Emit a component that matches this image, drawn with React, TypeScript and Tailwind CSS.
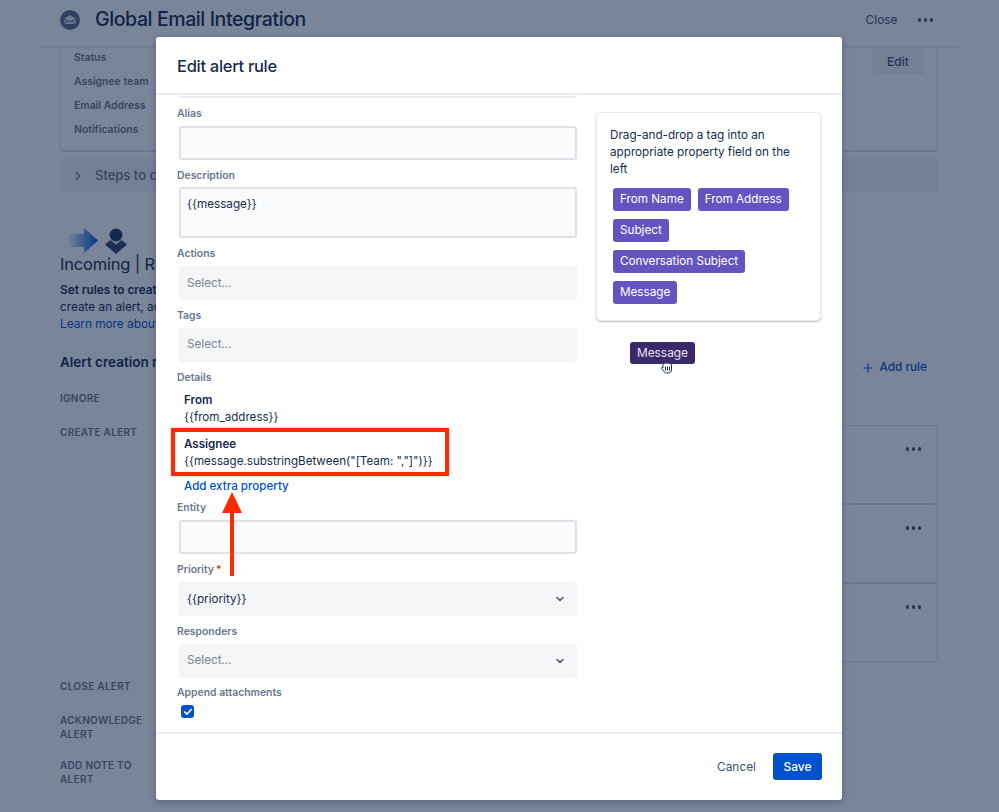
import { Check, ChevronDown, ChevronRight, Plus } from 'lucide-react';

const fontStack = "font-['Inter','Noto_Sans',sans-serif]";

function Dots({ className = '' }: { className?: string }) {
  return (
    <div className={`flex h-1 items-center gap-[2.5px] ${className}`}>
      <span className="size-[3.5px] rounded-full bg-[#42526e]" />
      <span className="size-[3.5px] rounded-full bg-[#42526e]" />
      <span className="size-[3.5px] rounded-full bg-[#42526e]" />
    </div>
  );
}

function MailBadge() {
  return (
    <svg width="20" height="20" viewBox="0 0 20 20" className="shrink-0">
      <circle cx="10" cy="10" r="10" fill="#5e6c84" />
      <path d="M4.5 8.5 10 5l5.500 3.500V14h-11z" fill="#fff" opacity="0.85" />
      <path d="M4.500 9 10 12l5.500-3M4.500 14 8.500 10.800M15.500 14l-4-3.200" fill="none" stroke="#5e6c84" strokeWidth="1" />
    </svg>
  );
}

function IncomingArt() {
  return (
    <svg width="62" height="28" viewBox="0 0 62 28" className="ml-[7px]">
      <defs>
        <linearGradient id="incoming-arrow" x1="0" x2="1" y1="0" y2="0">
          <stop offset="0" stopColor="#0052cc" stopOpacity="0" />
          <stop offset="1" stopColor="#0052cc" />
        </linearGradient>
      </defs>
      <path d="M0 7h17V1l14 12.500L17 26v-6H0z" fill="url(#incoming-arrow)" />
      <circle cx="49" cy="8" r="6.500" fill="#253858" />
      <path d="M38 17.500 43.500 13 49 17.500l5.500-4.500L60 17.500 49 27z" fill="#344563" />
    </svg>
  );
}

function BackgroundPage() {
  return (
    <div className="h-[812px] overflow-hidden bg-white text-[#172b4d]">
      <header className="mx-10 flex h-[48px] items-center justify-between border-b-2 border-[#ebecf0] pr-[26px] pb-[6px] pl-5">
        <div className="flex items-center gap-[15px]">
          <MailBadge />
          <h1 className="text-[19.5px] font-medium tracking-[-0.4px]">Global Email Integration</h1>
        </div>
        <div className="flex items-center gap-[20px]">
          <span className="text-[11.9px] text-[#42526e]">Close</span>
          <Dots />
        </div>
      </header>

      <main className="pr-[61px] pl-[60px]">
        <section className="flex h-[104px] justify-between rounded-b-[3px] border-x border-b-2 border-[#dfe1e6] px-[13px]">
          <div className="flex flex-col gap-2 pt-[2px] text-[10.4px] leading-4 font-semibold text-[#6b778c]">
            <span>Status</span>
            <span>Assignee team</span>
            <span>Email Address</span>
            <span>Notifications</span>
          </div>
          <div className="flex h-[27px] w-[52px] items-center justify-center rounded-[3px] bg-[#f4f5f7] text-[12px] font-medium text-[#42526e]">
            Edit
          </div>
        </section>

        <div className="mt-[6px] flex h-[34px] items-center gap-[10px] rounded-[3px] bg-[#f4f5f7] pt-[1px] pl-[11px] text-[13px] font-medium text-[#6b778c]">
          <ChevronRight size={14} strokeWidth={2.5} />
          <span>Steps to configure</span>
        </div>

        <div className="mt-[35px]">
          <IncomingArt />
          <h2 className="-mt-[3px] text-[16.5px] leading-6 tracking-[-0.2px]">Incoming | Rules</h2>
          <p className="mt-[6px] text-[11.8px] leading-[17px]">
            <span className="font-semibold">Set rules to create alerts</span>
            <br />
            create an alert, add
            <br />
            <span className="text-[#0052cc]">Learn more about</span>
          </p>
        </div>

        <div className="mt-[19px] flex h-5 items-start justify-between">
          <h3 className="text-[13.5px] leading-5 font-semibold">Alert creation rules</h3>
          <div className="mt-[9px] flex h-[14px] items-center gap-[4px] pr-[11px] text-[11.8px] font-medium text-[#0052cc]">
            <Plus size={14} />
            Add rule
          </div>
        </div>

        <div className="flex text-[10px] leading-[14px] font-semibold tracking-[0.3px] text-[#6b778c]">
          <div className="w-[140px] shrink-0 pt-[19px]">
            <div>IGNORE</div>
            <div className="mt-5">CREATE ALERT</div>
          </div>
          <div className="flex-1 pt-[53px]">
            {[0, 1, 2].map((row) => (
              <div key={row} className="flex h-[79px] justify-end rounded-[3px] border border-[#dfe1e6] pt-[21px] pr-4">
                <Dots />
              </div>
            ))}
          </div>
        </div>

        <div className="mt-[17px] w-[90px] text-[10px] leading-[14px] font-semibold tracking-[0.3px] text-[#6b778c]">
          <div>CLOSE ALERT</div>
          <div className="mt-5">ACKNOWLEDGE ALERT</div>
          <div className="mt-[17px]">ADD NOTE TO ALERT</div>
        </div>
      </main>
    </div>
  );
}

function Label({ children, required }: { children: string; required?: boolean }) {
  return (
    <div className="mb-1 flex h-4 items-center gap-[2px] text-[10.4px] font-semibold text-[#6b778c]">
      {children}
      {required && <span className="text-[#de350b]">*</span>}
    </div>
  );
}

function TextField({ label, value, tall }: { label: string; value?: string; tall?: boolean }) {
  return (
    <div>
      <Label>{label}</Label>
      <div className={`ml-[2px] rounded-[3px] border-2 border-[#dfe1e6] bg-[#fafbfc] px-[6px] pt-[6px] text-[11.7px] leading-[18px] text-[#172b4d] ${tall ? 'h-[51px]' : 'h-[34px]'}`}>
        {value}
      </div>
    </div>
  );
}

function SelectField({ label, value, placeholder, chevron, required }: { label: string; value?: string; placeholder?: string; chevron?: boolean; required?: boolean }) {
  return (
    <div>
      <Label required={required}>{label}</Label>
      <div className="ml-[2px] flex h-[34px] items-center justify-between rounded-[3px] bg-[#f4f5f7] pt-[1px] pr-[11px] pl-2 text-[11.7px]">
        {value ? <span className="text-[#172b4d]">{value}</span> : <span className="text-[#7a869a]">{placeholder}</span>}
        {chevron && <ChevronDown size={12} strokeWidth={3} className="text-[#42526e]" />}
      </div>
    </div>
  );
}

function Tag({ children }: { children: string }) {
  return (
    <span className="rounded-[3px] bg-[#6554c0] px-[7px] py-[2px] text-[11.7px] leading-[19px] text-white">{children}</span>
  );
}

function TagPanel() {
  return (
    <aside className="h-[209px] w-[225px] rounded-[5px] border border-[#ebecf0] bg-white px-[13px] pt-[14px] shadow-[0_1px_2px_rgba(9,30,66,0.3)]">
      <p className="text-[11.7px] leading-[17px] text-[#172b4d]">
        Drag-and-drop a tag into an appropriate property field on the left
      </p>
      <div className="mt-[10px] ml-[3px] flex flex-wrap gap-x-[7px] gap-y-2">
        <Tag>From Name</Tag>
        <Tag>From Address</Tag>
        <Tag>Subject</Tag>
        <Tag>Conversation Subject</Tag>
        <Tag>Message</Tag>
      </div>
    </aside>
  );
}

function GrabCursor() {
  return (
    <svg width="14" height="16" viewBox="0 0 14 16" className="absolute top-[323px] left-[504px]">
      <path
        d="M3 4.500c0-1.500 1.500-1.500 2-.8.300-1.300 2-1.300 2.300-.1.500-1 2-.8 2.200.3.800-.5 2 0 2 1v4.800c0 1.800-1.200 3.300-3 3.300H6.500c-1.300 0-2-.6-2.700-1.700L1.500 8.500c-.5-1 .6-1.700 1.500-.8z"
        fill="#fff"
        stroke="#172b4d"
        strokeWidth="1"
      />
      <path d="M5.500 6.500v4M7.500 6.500v4M9.500 6.500v4" stroke="#172b4d" strokeWidth="1" />
    </svg>
  );
}

function RedArrow() {
  return (
    <svg width="24" height="84" viewBox="0 0 24 84" className="absolute top-[455px] left-[64px]">
      <path d="M12 0 22 21H14V84H10V21H2z" fill="#ff2a00" />
    </svg>
  );
}

function EditAlertModal() {
  return (
    <div className="absolute top-[37px] left-[156px] flex h-[763px] w-[686px] flex-col rounded-[3px] bg-white text-[#172b4d] shadow-[0_2px_6px_rgba(9,30,66,0.3)]">
      <div className="flex h-[58px] shrink-0 items-center border-b-2 border-[#ebecf0] px-[21px] pt-[2px]">
        <h2 className="text-[16.5px] font-medium tracking-[-0.3px]">Edit alert rule</h2>
      </div>

      <div className="flex min-h-0 flex-1 justify-between overflow-hidden px-[21px]">
        <div className="flex w-[400px] flex-col gap-[7.7px]">
          <div className="ml-[2px] h-[3px] shrink-0 rounded-b-[3px] border-x-2 border-b-2 border-[#ebecf0]" />
          <TextField label="Alias" />
          <TextField label="Description" value="{{message}}" tall />
          <SelectField label="Actions" placeholder="Select..." />
          <SelectField label="Tags" placeholder="Select..." />

          <div className="-mb-[3px]">
            <Label>Details</Label>
            <div className="pt-[3px] pl-[7px] text-[11.6px] leading-[17px]">
              <div className="font-semibold">From</div>
              <div>{'{{from_address}}'}</div>
              <div className="mt-[10px] font-semibold">Assignee</div>
              <div>{'{{message.substringBetween("[Team: ","]")}}'}</div>
              <div className="mt-2 font-medium text-[#0052cc]">Add extra property</div>
            </div>
          </div>

          <TextField label="Entity" />
          <SelectField label="Priority" value="{{priority}}" chevron required />
          <SelectField label="Responders" placeholder="Select..." chevron />

          <div>
            <Label>Append attachments</Label>
            <div className="mt-[2px] ml-1 flex size-[13px] items-center justify-center rounded-[3px] bg-[#0052cc]">
              <Check size={10} strokeWidth={4} className="text-white" />
            </div>
          </div>
        </div>

        <div className="pt-[17px]">
          <TagPanel />
        </div>
      </div>

      <div className="flex h-[68px] shrink-0 items-center justify-end gap-[17px] border-t-2 border-[#ebecf0] px-[20px] pb-[1px]">
        <span className="text-[11.9px] text-[#42526e]">Cancel</span>
        <span className="flex h-[27px] w-[49px] items-center justify-center rounded-[3px] bg-[#0052cc] text-[11.9px] font-medium text-white">
          Save
        </span>
      </div>

      <div className="absolute top-[305px] left-[474px] flex h-[22px] w-[65px] items-center justify-center rounded-[3px] bg-[#3a2a6c] text-[11.9px] text-[#e6e3f2]">
        Message
      </div>
      <GrabCursor />
      <div className="absolute top-[391px] left-[15px] h-[48px] w-[278px] border-[4px] border-[#ff2a00] shadow-[0_0_2px_rgba(0,0,0,0.3)]" />
      <RedArrow />
    </div>
  );
}

export default function App() {
  return (
    <div className={`relative h-[812px] w-[999px] overflow-hidden ${fontStack}`}>
      <BackgroundPage />
      <div className="absolute inset-0 bg-[#091e42]/54" />
      <EditAlertModal />
    </div>
  );
}
